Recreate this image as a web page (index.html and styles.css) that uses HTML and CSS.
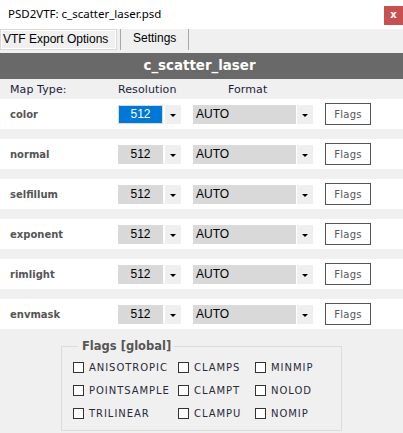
FILE: index.html
```html
<!DOCTYPE html>
<html>
<head>
<meta charset="utf-8">
<link rel="stylesheet" href="styles.css">
</head>
<body>
<div class="window">
  <div class="titlebar">
    <span class="title">PSD2VTF: c_scatter_laser.psd</span>
    <span class="close">x</span>
  </div>
  <div class="tabs">
    <div class="tab active">VTF Export Options</div>
    <div class="tab">Settings</div>
  </div>
  <div class="header">c_scatter_laser</div>
  <div class="grid colhead">
    <span>Map Type:</span>
    <span>Resolution</span>
    <span class="fmt-head">Format</span>
  </div>
  <div class="rows">
    <div class="grid row">
      <span class="label">color</span>
      <div class="select res"><span class="val sel"><span class="hl">512</span></span><span class="arrow"></span></div>
      <div class="select fmt"><span class="val">AUTO</span><span class="arrow"></span></div>
      <button class="flags">Flags</button>
    </div>
    <div class="grid row">
      <span class="label">normal</span>
      <div class="select res"><span class="val">512</span><span class="arrow"></span></div>
      <div class="select fmt"><span class="val">AUTO</span><span class="arrow"></span></div>
      <button class="flags">Flags</button>
    </div>
    <div class="grid row">
      <span class="label">selfillum</span>
      <div class="select res"><span class="val">512</span><span class="arrow"></span></div>
      <div class="select fmt"><span class="val">AUTO</span><span class="arrow"></span></div>
      <button class="flags">Flags</button>
    </div>
    <div class="grid row">
      <span class="label">exponent</span>
      <div class="select res"><span class="val">512</span><span class="arrow"></span></div>
      <div class="select fmt"><span class="val">AUTO</span><span class="arrow"></span></div>
      <button class="flags">Flags</button>
    </div>
    <div class="grid row">
      <span class="label">rimlight</span>
      <div class="select res"><span class="val">512</span><span class="arrow"></span></div>
      <div class="select fmt"><span class="val">AUTO</span><span class="arrow"></span></div>
      <button class="flags">Flags</button>
    </div>
    <div class="grid row">
      <span class="label">envmask</span>
      <div class="select res"><span class="val">512</span><span class="arrow"></span></div>
      <div class="select fmt"><span class="val">AUTO</span><span class="arrow"></span></div>
      <button class="flags">Flags</button>
    </div>
  </div>
  <fieldset class="group">
    <legend>Flags [global]</legend>
    <div class="checks">
      <label class="check"><span class="box"></span>ANISOTROPIC</label>
      <label class="check"><span class="box"></span>CLAMPS</label>
      <label class="check"><span class="box"></span>MINMIP</label>
      <label class="check"><span class="box"></span>POINTSAMPLE</label>
      <label class="check"><span class="box"></span>CLAMPT</label>
      <label class="check"><span class="box"></span>NOLOD</label>
      <label class="check"><span class="box"></span>TRILINEAR</label>
      <label class="check"><span class="box"></span>CLAMPU</label>
      <label class="check"><span class="box"></span>NOMIP</label>
    </div>
  </fieldset>
</div>
</body>
</html>
```
FILE: styles.css
```css
* { box-sizing: border-box; }
html, body { margin: 0; padding: 0; }
body {
  width: 403px;
  height: 433px;
  background: #f0f0f0;
  overflow: hidden;
  font-family: "DejaVu Sans", Verdana, sans-serif;
}
.window { width: 403px; }

.titlebar {
  height: 29px;
  background: #ffffff;
  display: flex;
  align-items: flex-start;
  padding-left: 8px;
}
.title {
  font-family: "Noto Sans", "Open Sans", sans-serif;
  font-size: 11.5px;
  color: #000;
  line-height: 28px;
}
.close {
  margin-left: auto;
  margin-top: 6px;
  width: 19px;
  height: 19px;
  background: #c75050;
  color: #fff;
  font-family: "DejaVu Sans", sans-serif;
  font-weight: bold;
  font-size: 10px;
  line-height: 17px;
  text-align: center;
}

.tabs {
  height: 24px;
  display: flex;
  align-items: flex-start;
}
.tab {
  font-family: "Liberation Sans", Arial, sans-serif;
  font-size: 12px;
  color: #000;
  height: 21px;
  line-height: 19px;
}
.tab.active {
  width: 117px;
  padding-left: 2px;
  border: 1px solid #d9d9d9;
  box-shadow: inset 1px 1px 0 #ffffff, inset -1px -1px 0 #ffffff;
}
.tab:not(.active) {
  margin-left: 3px;
  width: 69px;
  padding-left: 12px;
  border-left: 1px solid #a8a8a8;
  border-right: 1px solid #a8a8a8;
  line-height: 18px;
}

.header {
  height: 26px;
  background: #696969;
  color: #ffffff;
  font-weight: bold;
  font-size: 13.4px;
  text-align: center;
  line-height: 25px;
  padding-right: 4px;
}

.grid {
  display: grid;
  grid-template-columns: 96px 63px 120px 46px;
  column-gap: 12px;
  padding-left: 10px;
  align-items: center;
}
.colhead {
  height: 20px;
  font-size: 11px;
  color: #1c1c3a;
  letter-spacing: 0.1px;
}
.fmt-head { padding-left: 35px; grid-column: span 2; }

.rows {
  display: flex;
  flex-direction: column;
  gap: 10px;
}
.row {
  height: 30px;
  background: #ffffff;
}
.label {
  font-weight: bold;
  font-size: 10px;
  color: #555555;
}

.select {
  display: flex;
  height: 19px;
  gap: 2px;
  margin-top: 1px;
}
.select.fmt { gap: 1px; }
.val {
  background: #d9d9d9;
  font-family: "Liberation Sans", Arial, sans-serif;
  font-size: 12px;
  line-height: 19px;
  color: #000;
}
.res .val { width: 45px; text-align: center; }
.fmt .val { width: 103px; padding-left: 3px; }
.val.sel { padding: 1px; }
.hl {
  display: block;
  height: 17px;
  background: #0078d7;
  color: #ffffff;
  line-height: 17px;
}
.arrow {
  width: 16px;
  background: #efefef;
  display: flex;
  align-items: center;
  justify-content: center;
}
.arrow::before {
  content: "";
  border-left: 3px solid transparent;
  border-right: 3px solid transparent;
  border-top: 3px solid #000;
  margin-top: 1px;
}
.flags {
  width: 46px;
  height: 22px;
  padding: 0;
  margin: 0;
  background: #ffffff;
  border: 1px solid #555555;
  font-family: "DejaVu Sans", Verdana, sans-serif;
  font-size: 10px;
  letter-spacing: 0.3px;
  color: #555555;
}

.group {
  margin: 10px 0 0 61px;
  width: 281px;
  padding: 0 0 5px 11px;
  border: 1px solid #dcdcdc;
}
.group legend {
  margin-left: 5px;
  padding: 0 3px 0 4px;
  font-weight: bold;
  font-size: 11.5px;
  color: #555555;
  line-height: 14px;
}
.checks {
  display: grid;
  grid-template-columns: 105px 77px 80px;
  grid-auto-rows: 23px;
  padding-top: 3px;
}
.check {
  display: flex;
  align-items: center;
  gap: 5px;
  font-size: 10px;
  letter-spacing: 0.95px;
  color: #2a2a3a;
  white-space: nowrap;
}
.box {
  width: 11px;
  height: 11px;
  border: 1px solid #333333;
  background: #ffffff;
  flex: none;
}
```
